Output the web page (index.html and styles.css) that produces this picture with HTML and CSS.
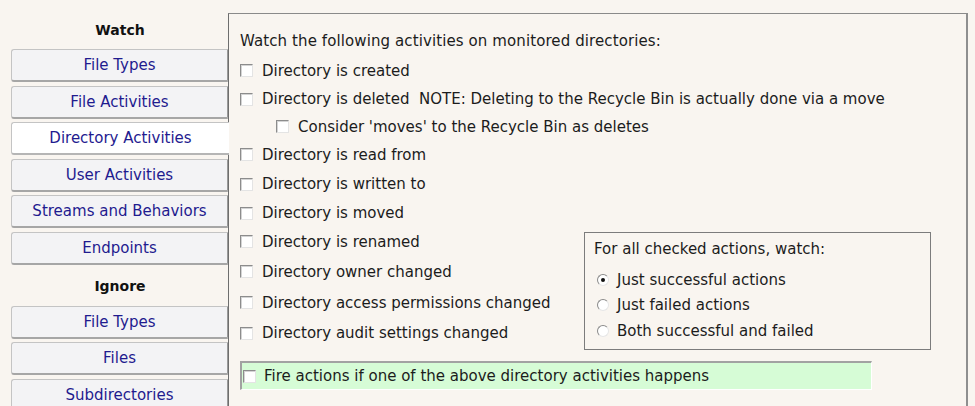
FILE: index.html
```html
<!DOCTYPE html>
<html>
<head>
<meta charset="utf-8">
<link rel="stylesheet" href="styles.css">
</head>
<body>
<div class="page">
  <nav class="sidebar">
    <div class="heading">Watch</div>
    <div class="btn">File Types</div>
    <div class="btn">File Activities</div>
    <div class="btn selected">Directory Activities</div>
    <div class="btn">User Activities</div>
    <div class="btn">Streams and Behaviors</div>
    <div class="btn">Endpoints</div>
    <div class="heading">Ignore</div>
    <div class="btn">File Types</div>
    <div class="btn">Files</div>
    <div class="btn">Subdirectories</div>
  </nav>
  <main class="panel">
    <div class="columns">
      <div class="list">
        <div class="row title">Watch the following activities on monitored directories:</div>
        <div class="row h29"><span class="cb"></span><span class="nowrap">Directory is created</span></div>
        <div class="row h28"><span class="cb"></span><span class="nowrap">Directory is deleted&nbsp; NOTE: Deleting to the Recycle Bin is actually done via a move</span></div>
        <div class="row h27 sub"><span class="cb"></span><span class="nowrap">Consider 'moves' to the Recycle Bin as deletes</span></div>
        <div class="row h29"><span class="cb"></span>Directory is read from</div>
        <div class="row h30"><span class="cb"></span>Directory is written to</div>
        <div class="row h28"><span class="cb"></span>Directory is moved</div>
        <div class="row h29"><span class="cb"></span>Directory is renamed</div>
        <div class="row h31"><span class="cb"></span>Directory owner changed</div>
        <div class="row h31"><span class="cb"></span>Directory access permissions changed</div>
        <div class="row h30"><span class="cb"></span>Directory audit settings changed</div>
      </div>
      <fieldset class="group">
        <div class="group-title">For all checked actions, watch:</div>
        <div class="radio-row"><span class="radio checked"></span>Just successful actions</div>
        <div class="radio-row"><span class="radio"></span>Just failed actions</div>
        <div class="radio-row"><span class="radio"></span>Both successful and failed</div>
      </fieldset>
    </div>
    <div class="fire"><span class="cb"></span>Fire actions if one of the above directory activities happens</div>
  </main>
</div>
</body>
</html>
```
FILE: styles.css
```css
* { box-sizing: border-box; }
html, body {
  margin: 0;
  padding: 0;
  background: #f9f5f0;
  font-family: "DejaVu Sans", Verdana, sans-serif;
  font-size: 15px;
  color: #1c1c1c;
  overflow: hidden;
}
.page {
  display: flex;
  height: 406px;
}
.sidebar {
  width: 218px;
  margin-left: 11px;
  padding-top: 12px;
  display: flex;
  flex-direction: column;
  flex: none;
  position: relative;
  z-index: 1;
}
.heading {
  flex: none;
  height: 37px;
  padding-bottom: 2px;
  display: flex;
  align-items: center;
  justify-content: center;
  font-weight: bold;
  color: #111;
  font-size: 14px;
}
.btn {
  flex: none;
  height: 33px;
  margin-bottom: 3.6px;
  width: 217px;
  display: flex;
  align-items: center;
  justify-content: center;
  background: #f3f3f5;
  color: #1f1b8f;
  border: 1px solid #c4c4c4;
  border-right-color: #9a9a9a;
  border-bottom: 2px solid #a6a6a6;
  border-radius: 3px 0 0 3px;
  white-space: nowrap;
}
.btn.selected {
  background: #ffffff;
  width: 218px;
  border-right: none;
  border-bottom-color: #b5b5b5;
}
.panel {
  flex: 1;
  margin-top: 13px;
  margin-right: 7px;
  border-top: 1px solid #8a8a8a;
  border-left: 1px solid #6e6e6e;
  border-right: 2px solid #8f8f8f;
  padding-left: 11px;
  padding-top: 11px;
  margin-left: -1px;
}
.columns {
  display: flex;
}
.list {
  width: 344px;
  flex: none;
}
.row {
  display: flex;
  align-items: center;
  height: 29px;
  white-space: nowrap;
}
.row.title { height: 31px; letter-spacing: 0.1px; }
.row.h27 { height: 27px; }
.row.h28 { height: 28px; }
.row.h29 { height: 29px; }
.row.h30 { height: 30px; }
.row.h31 { height: 31px; }
.row.sub { padding-left: 36px; }
.nowrap { white-space: nowrap; }
.cb {
  width: 13px;
  height: 13px;
  flex: none;
  background: #fff;
  border: 1px solid;
  border-color: #8c8c8c #e4e4e4 #e4e4e4 #8c8c8c;
  box-shadow: inset 1px 1px 0 #d4d4d4;
  margin-right: 9px;
}
.group {
  margin: 207px 0 0 0;
  width: 347px;
  height: 118px;
  border: 1px solid #7c7c7c;
  padding: 3px 0 0 9px;
}
.group-title {
  height: 26px;
  margin-bottom: 5px;
  display: flex;
  align-items: center;
}
.radio-row {
  display: flex;
  align-items: center;
  height: 25.5px;
  white-space: nowrap;
}
.radio {
  width: 12px;
  height: 12px;
  border-radius: 50%;
  background: #fff;
  border: 1px solid;
  border-color: #8a8a8a #e6e6e6 #e6e6e6 #8a8a8a;
  margin: 0 8px 0 3px;
  flex: none;
  display: flex;
  align-items: center;
  justify-content: center;
}
.radio.checked::after {
  content: "";
  width: 4px;
  height: 4px;
  border-radius: 50%;
  background: #111;
}
.fire {
  margin-top: 11px;
  width: 632px;
  height: 29px;
  background: #d6fcd6;
  border-top: 2px solid #a2a2a2;
  border-left: 2px solid #a2a2a2;
  border-right: 1px solid #ffffff;
  border-bottom: 1px solid #ffffff;
  display: flex;
  align-items: center;
  padding-left: 1px;
  white-space: nowrap;
}
.fire .cb { margin-right: 8px; }
```
